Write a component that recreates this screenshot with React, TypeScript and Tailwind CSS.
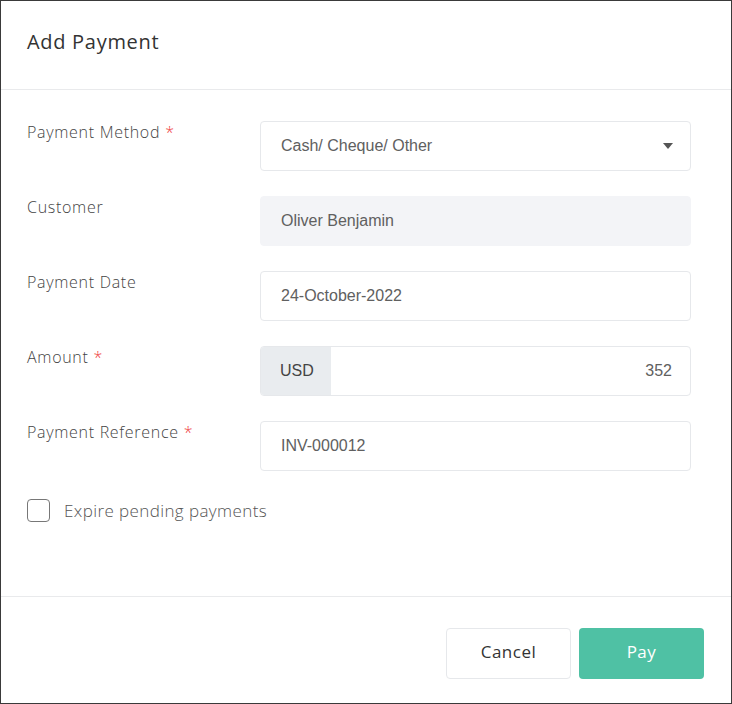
import React from "react";

const labelFont = { fontFamily: '"Open Sans", "Noto Sans", sans-serif' };

interface RowProps {
  label: string;
  required?: boolean;
  children: React.ReactNode;
}

const Row: React.FC<RowProps> = ({ label, required, children }) => {
  return (
    <div className="flex items-start">
      <div
        className="w-[233px] text-[16px] leading-[22px] tracking-[0.7px] text-[#444] font-light"
        style={labelFont}
      >
        {label}
        {required && <span className="text-[#ef4444] ml-[5px]">*</span>}
      </div>
      <div className="w-[431px]">{children}</div>
    </div>
  );
};

const inputBox =
  "h-[50px] w-full rounded-[4px] border border-[#e6e8eb] flex items-center px-[20px] text-[16px] text-[#606060] font-['Liberation_Sans',Arial,sans-serif]";

export default function App() {
  return (
    <div className="w-[732px] h-[704px] border border-[#3a3a3a] bg-white flex flex-col">
      <div className="h-[89px] border-b border-[#e9eaec] flex items-center px-[26px] pb-[6px]">
        <h1 className="text-[20px] tracking-[0.7px] text-[#333] font-normal" style={labelFont}>
          Add Payment
        </h1>
      </div>

      <div className="flex-1 px-[26px] pt-[31px] flex flex-col gap-[25px]">
        <Row label="Payment Method" required>
          <div className={inputBox + " justify-between"}>
            <span>Cash/ Cheque/ Other</span>
            <svg width="10" height="6" viewBox="0 0 10 6" className="mr-[-3px]">
              <path d="M0 0 H10 L5 6 Z" fill="#555" />
            </svg>
          </div>
        </Row>
        <Row label="Customer">
          <div className={inputBox + " bg-[#f3f4f7] border-[#f3f4f7]"}>Oliver Benjamin</div>
        </Row>
        <Row label="Payment Date">
          <div className={inputBox}>24-October-2022</div>
        </Row>
        <Row label="Amount" required>
          <div className="h-[50px] w-full rounded-[4px] border border-[#e6e8eb] flex overflow-hidden text-[16px] text-[#606060] font-['Liberation_Sans',Arial,sans-serif]">
            <div className="w-[70px] bg-[#e9ecef] flex items-center px-[19px] text-[#444]">USD</div>
            <div className="flex-1 flex items-center justify-end px-[18px]">352</div>
          </div>
        </Row>
        <Row label="Payment Reference" required>
          <div className={inputBox}>INV-000012</div>
        </Row>

        <label className="flex items-center gap-[14px] mt-[2px]">
          <span className="w-[23px] h-[23px] rounded-[4px] border border-[#777]" />
          <span
            className="text-[17px] tracking-[0.4px] text-[#555] font-light"
            style={labelFont}
          >
            Expire pending payments
          </span>
        </label>
      </div>

      <div className="h-[107px] border-t border-[#e9eaec] flex justify-end items-start gap-[8px] pt-[31px] pl-[26px] pr-[27px]">
        <button
          className="w-[125px] h-[51px] pb-[3px] rounded-[4px] border border-[#e6e8eb] text-[17px] tracking-[0.5px] text-[#333] bg-white"
          style={labelFont}
        >
          Cancel
        </button>
        <button
          className="w-[125px] h-[51px] pb-[3px] rounded-[4px] bg-[#4fc1a4] text-[17px] tracking-[0.5px] text-white font-medium"
          style={labelFont}
        >
          Pay
        </button>
      </div>
    </div>
  );
}
